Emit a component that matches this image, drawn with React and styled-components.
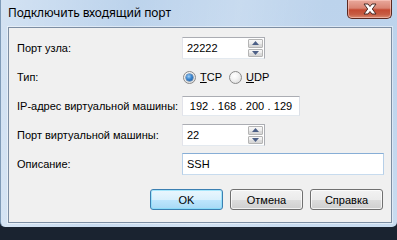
import React from "react";
import styled, { createGlobalStyle } from "styled-components";

const Global = createGlobalStyle`
  html, body { margin: 0; padding: 0; background: #1a2330; }
  body { font-family: "Liberation Sans", Arial, sans-serif; font-size: 11px; color: #000; }
  * { box-sizing: border-box; }
`;

const Window = styled.div`
  width: 397px;
  height: 227px;
  display: flex;
  flex-direction: column;
  padding: 0 5px 4px 7px;
  border-left: 1px solid #7f9bb8;
  border-radius: 0 0 5px 5px;
  background:
    linear-gradient(100deg, rgba(255,255,255,0.35) 0%, rgba(255,255,255,0) 30%, rgba(255,255,255,0.18) 55%, rgba(255,255,255,0) 75%),
    linear-gradient(to bottom, #bcd3ec 0%, #bfd5ed 40%, #c9dcf0 100%);
`;

const TitleBar = styled.div`
  height: 27px;
  display: flex;
  align-items: flex-start;
  justify-content: space-between;
  flex-shrink: 0;
`;

const Title = styled.div`
  font-family: "Noto Sans", "Open Sans", sans-serif;
  font-size: 12px;
  padding-top: 4px;
  color: #000;
  letter-spacing: -0.1px;
`;

const CloseButton = styled.div`
  width: 45px;
  height: 19px;
  border: 1px solid #5b2820;
  border-top: none;
  border-radius: 0 0 5px 5px;
  display: flex;
  align-items: center;
  justify-content: center;
  background: linear-gradient(to bottom, #e9a99c 0%, #d98473 45%, #c44a32 55%, #c75c43 80%, #d88b70 100%);
  box-shadow: inset 0 0 0 1px rgba(255, 210, 200, 0.55);
`;

const Client = styled.div`
  flex: 1;
  display: flex;
  flex-direction: column;
  background: #f0f0f0;
  border: 1px solid #7d8ea3;
  box-shadow: 0 0 0 1px rgba(255,255,255,0.45);
  padding: 9px 8px 0 8px;
`;

const Form = styled.div`
  display: grid;
  grid-template-columns: 165px 1fr;
  grid-auto-rows: 22px;
  row-gap: 7px;
  align-items: center;
`;

const Label = styled.div`
  white-space: nowrap;
`;

const Box = styled.div`
  height: ${(p) => p.$h || 22}px;
  width: ${(p) => p.$w}px;
  background: #fff;
  border: 1px solid ${(p) => (p.$focus ? "#a9c6e3" : "#abadb3")};
  border-top-color: ${(p) => (p.$focus ? "#87aed6" : "#abadb3")};
  border-left-color: ${(p) => (p.$focus ? "#b6cfe8" : "#e2e3ea")};
  border-right-color: ${(p) => (p.$focus ? "#b6cfe8" : "#dbdfe6")};
  border-bottom-color: ${(p) => (p.$focus ? "#c7dbee" : "#e3e9ef")};
  display: flex;
  align-items: center;
  padding-left: ${(p) => p.$pl ?? 4}px;
`;

const SpinBox = styled.div`
  width: 83px;
  height: 22px;
  background: #fff;
  border: 1px solid #abadb3;
  border-left-color: #e2e3ea;
  border-bottom-color: #e3e9ef;
  display: flex;
  align-items: stretch;
`;

const SpinText = styled.div`
  flex: 1;
  display: flex;
  align-items: center;
  padding-left: 4px;
`;

const SpinButtons = styled.div`
  width: 16px;
  display: flex;
  flex-direction: column;
  gap: 1px;
  padding: 1px 1px 1px 0;
`;

const SpinBtn = styled.div`
  flex: 1;
  border: 1px solid #b5b5b5;
  border-radius: 1px;
  background: linear-gradient(to bottom, #f7f7f7 0%, #ececec 50%, #dedede 51%, #d6d6d6 100%);
  display: flex;
  align-items: center;
  justify-content: center;
`;

const Tri = ({ up }) => (
  <svg width="7" height="4" viewBox="0 0 7 4">
    <path d={up ? "M0 4 L3.5 0 L7 4 Z" : "M0 0 L3.5 4 L7 0 Z"} fill="#4c5f86" />
  </svg>
);

const RadioRow = styled.div`
  display: flex;
  align-items: center;
  padding-left: 1px;
`;

const RadioItem = styled.label`
  display: flex;
  align-items: center;
  gap: 4px;
  margin-right: 7px;
`;

const RadioCircle = styled.span`
  width: 13px;
  height: 13px;
  border-radius: 50%;
  border: 1px solid #8a8a8a;
  background: radial-gradient(circle at 40% 35%, #ffffff 0%, #f3f3f3 40%, #d4d4d4 100%);
  display: flex;
  align-items: center;
  justify-content: center;
  &::after {
    content: "";
    display: ${(p) => (p.$checked ? "block" : "none")};
    width: 7px;
    height: 7px;
    border-radius: 50%;
    background: radial-gradient(circle at 40% 35%, #9fd0f8 0%, #3c86cf 45%, #124f95 100%);
    box-shadow: 0 0 0 0.5px #2b5a8c;
  }
`;

const IpField = styled.span`
  width: 24px;
  text-align: center;
`;

const IpDot = styled.span`
  width: 4px;
  text-align: center;
`;

const ButtonRow = styled.div`
  display: flex;
  justify-content: flex-end;
  gap: 7px;
  margin-top: 14px;
`;

const Button = styled.div`
  width: 73px;
  height: 21px;
  border-radius: 3px;
  display: flex;
  align-items: center;
  justify-content: center;
  border: 1px solid ${(p) => (p.$default ? "#3c7fb1" : "#707070")};
  background: ${(p) =>
    p.$default
      ? "linear-gradient(to bottom, #eaf6fd 0%, #d9f0fc 50%, #bee6fd 51%, #a7d9f5 100%)"
      : "linear-gradient(to bottom, #f2f2f2 0%, #ebebeb 50%, #dddddd 51%, #cfcfcf 100%)"};
  box-shadow: inset 0 0 0 1px ${(p) => (p.$default ? "rgba(120,220,250,0.6)" : "rgba(255,255,255,0.7)")};
`;

const Spinner = ({ value }) => (
  <SpinBox>
    <SpinText>{value}</SpinText>
    <SpinButtons>
      <SpinBtn><Tri up /></SpinBtn>
      <SpinBtn><Tri /></SpinBtn>
    </SpinButtons>
  </SpinBox>
);

export default function App() {
  return (
    <>
      <Global />
      <Window>
        <TitleBar>
          <Title>Подключить входящий порт</Title>
          <CloseButton>
            <svg width="16" height="12" viewBox="0 0 16 12">
              <path
                d="M2 1 H6 L8 3.5 L10 1 H14 L10.3 6 L14 11 H10 L8 8.5 L6 11 H2 L5.7 6 Z"
                fill="#ffffff"
                stroke="#4a2a26"
                strokeWidth="1"
                strokeLinejoin="round"
              />
            </svg>
          </CloseButton>
        </TitleBar>
        <Client>
          <Form>
            <Label>Порт узла:</Label>
            <Spinner value="22222" />

            <Label>Тип:</Label>
            <RadioRow>
              <RadioItem>
                <RadioCircle $checked />
                <span><u>T</u>CP</span>
              </RadioItem>
              <RadioItem>
                <RadioCircle />
                <span><u>U</u>DP</span>
              </RadioItem>
            </RadioRow>

            <Label>IP-адрес виртуальной машины:</Label>
            <Box $w={118} $h={20} $pl={4}>
              <IpField>192</IpField>
              <IpDot>.</IpDot>
              <IpField>168</IpField>
              <IpDot>.</IpDot>
              <IpField>200</IpField>
              <IpDot>.</IpDot>
              <IpField>129</IpField>
            </Box>

            <Label>Порт виртуальной машины:</Label>
            <Spinner value="22" />

            <Label>Описание:</Label>
            <Box $w={202} $focus>SSH</Box>
          </Form>
          <ButtonRow>
            <Button $default>OK</Button>
            <Button>Отмена</Button>
            <Button>Справка</Button>
          </ButtonRow>
        </Client>
      </Window>
    </>
  );
}
